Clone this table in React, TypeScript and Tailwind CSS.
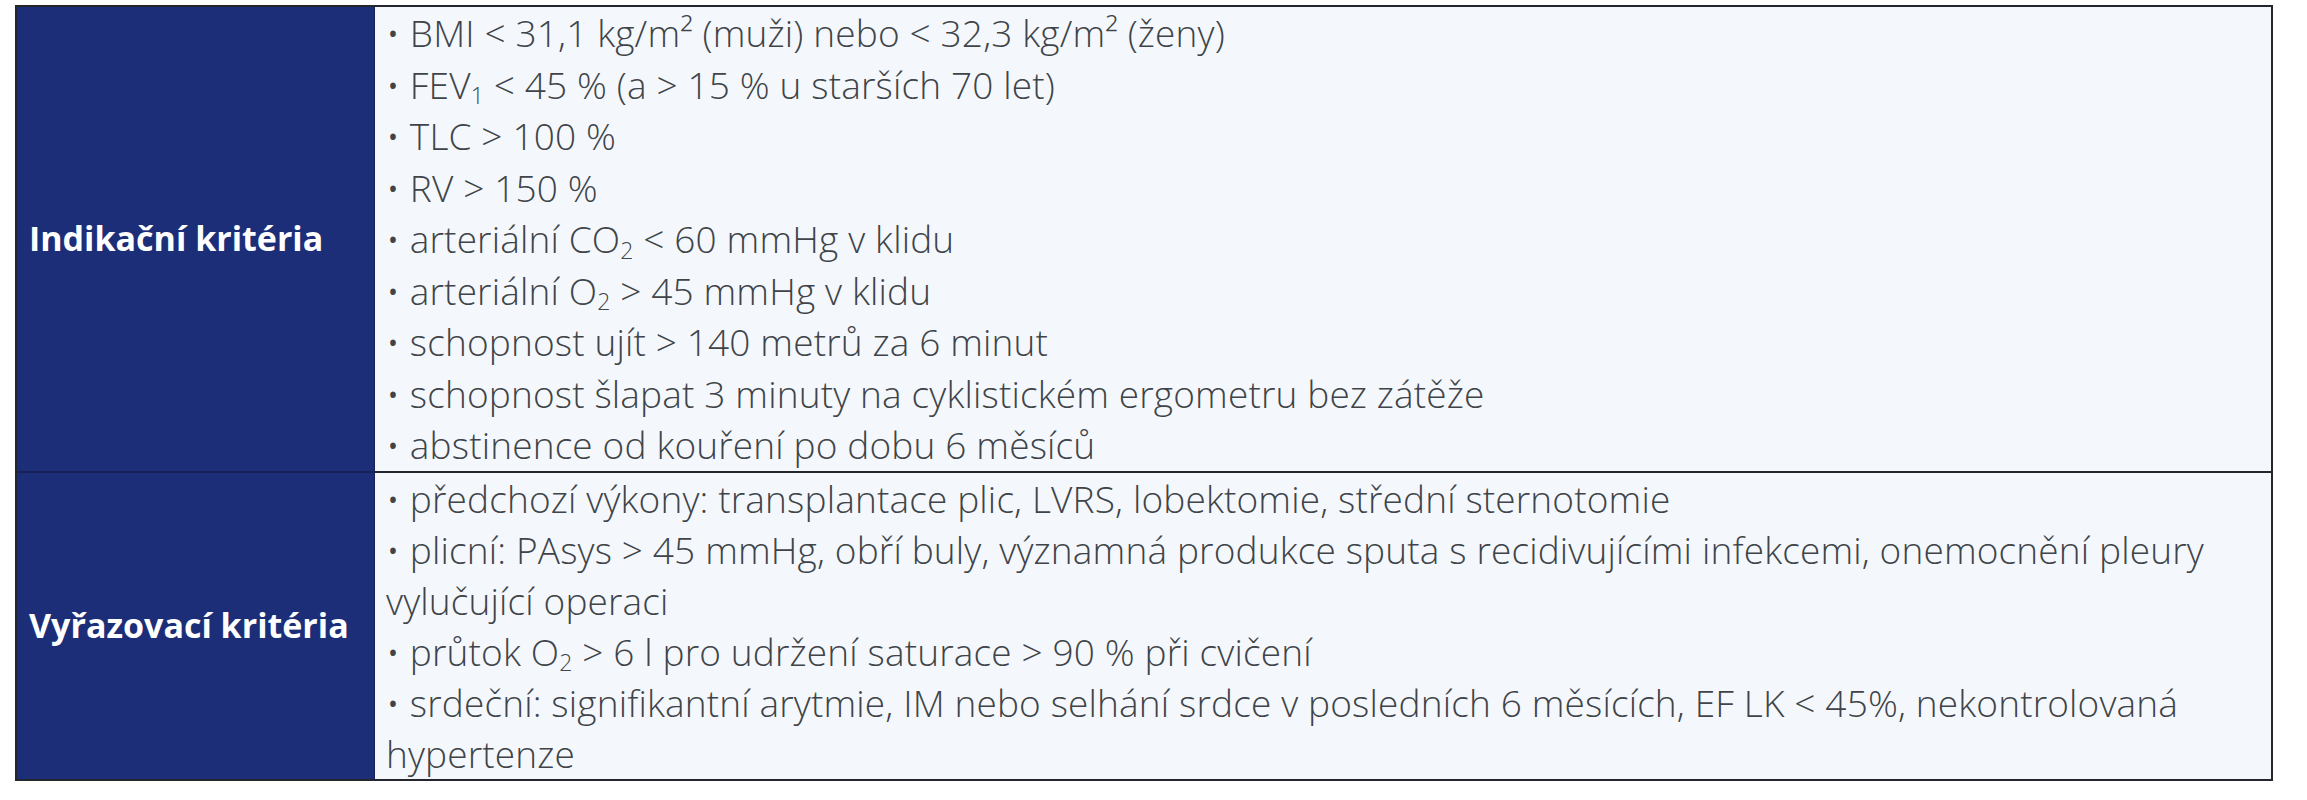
import React from "react";

function Sub({ children }: { children: React.ReactNode }) {
  return <sub className="text-[0.62em]">{children}</sub>;
}

function Label({ text, top }: { text: string; top?: boolean }) {
  return (
    <div
      className={
        top
          ? "flex items-center border-r border-[#16215a] bg-[#1d2e78] pl-[12px] font-['Open_Sans',sans-serif] text-[34px] font-bold text-white"
          : "flex items-center border-r border-t-2 border-[#16215a] bg-[#1d2e78] pl-[12px] font-['Open_Sans',sans-serif] text-[34px] font-bold text-white"
      }
    >
      {text}
    </div>
  );
}

function Items({ items, top }: { items: React.ReactNode[]; top?: boolean }) {
  return (
    <div
      className={
        top
          ? "bg-[#f4f8fd] pl-[11px] pr-[20px] font-['Open_Sans',sans-serif] text-[37px] font-light leading-[51.5px] tracking-[0.15px] text-[#404448]"
          : "border-t-2 border-[#24262e] bg-[#f4f8fd] pl-[11px] pr-[20px] font-['Open_Sans',sans-serif] text-[37px] font-light leading-[51px] tracking-[0.15px] text-[#404448]"
      }
    >
      {items.map((r, i) => (
        <div key={i}>{r}</div>
      ))}
    </div>
  );
}

export default function App() {
  const row1: React.ReactNode[] = [
    <>• BMI &lt; 31,1 kg/m² (muži) nebo &lt; 32,3 kg/m² (ženy)</>,
    <>• FEV<Sub>1</Sub> &lt; 45 % (a &gt; 15 % u starších 70 let)</>,
    <>• TLC &gt; 100 %</>,
    <>• RV &gt; 150 %</>,
    <>• arteriální CO<Sub>2</Sub> &lt; 60 mmHg v klidu</>,
    <>• arteriální O<Sub>2</Sub> &gt; 45 mmHg v klidu</>,
    <>• schopnost ujít &gt; 140 metrů za 6 minut</>,
    <>• schopnost šlapat 3 minuty na cyklistickém ergometru bez zátěže</>,
    <>• abstinence od kouření po dobu 6 měsíců</>,
  ];
  const row2: React.ReactNode[] = [
    <>• předchozí výkony: transplantace plic, LVRS, lobektomie, střední sternotomie</>,
    <>• plicní: PAsys &gt; 45 mmHg, obří buly, významná produkce sputa s recidivujícími infekcemi, onemocnění pleury vylučující operaci</>,
    <>• průtok O<Sub>2</Sub> &gt; 6 l pro udržení saturace &gt; 90 % při cvičení</>,
    <>• srdeční: signifikantní arytmie, IM nebo selhání srdce v posledních 6 měsících, EF LK &lt; 45%, nekontrolovaná hypertenze</>,
  ];
  return (
    <div className="min-h-[800px] w-[2307px] bg-white pl-[15px] pt-[5px]">
      <div className="grid w-[2258px] grid-cols-[358px_1fr] border-2 border-[#24262e]">
        <Label text="Indikační kritéria" top />
        <Items items={row1} top />
        <Label text="Vyřazovací kritéria" />
        <Items items={row2} />
      </div>
    </div>
  );
}
